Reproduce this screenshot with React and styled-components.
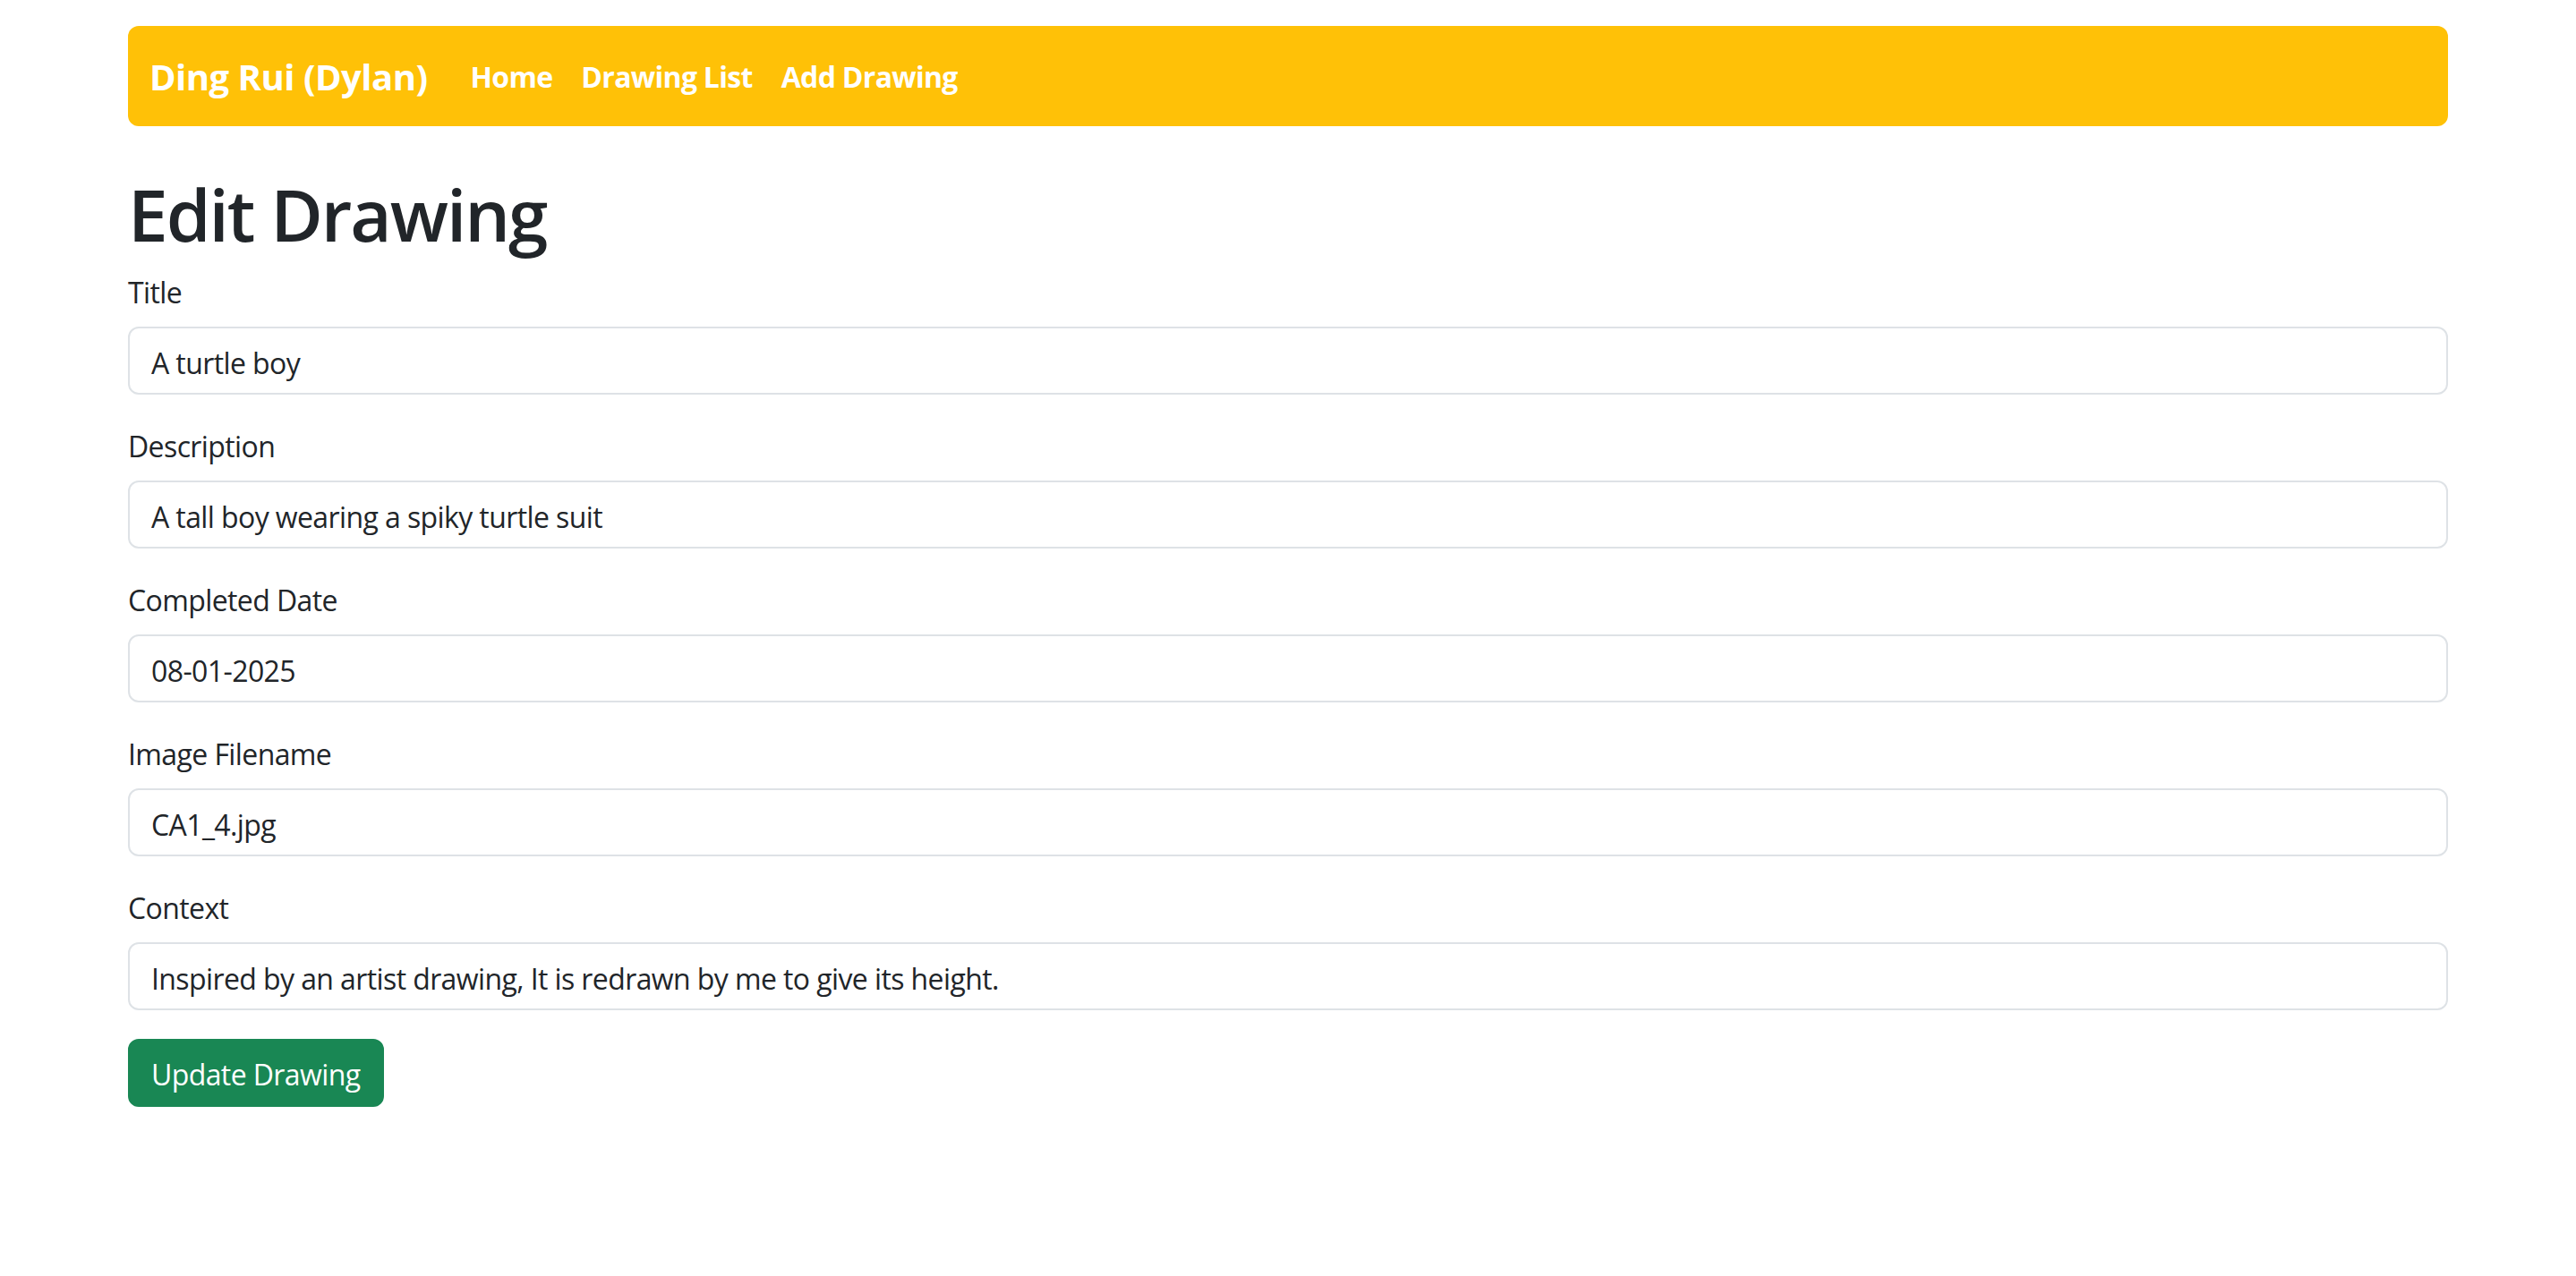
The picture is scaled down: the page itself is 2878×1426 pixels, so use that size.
import styled, { createGlobalStyle } from "styled-components";

const GlobalStyle = createGlobalStyle`
  body {
    margin: 0;
    background: #fff;
    color: #212529;
    font-family: "Open Sans", "Noto Sans", sans-serif;
  }
  * {
    box-sizing: border-box;
  }
`;

const Container = styled.div`
  width: 2592px;
  margin: 0 auto;
  padding-top: 29px;
`;

const Navbar = styled.nav`
  display: flex;
  align-items: center;
  background-color: #ffc107;
  border-radius: 12px;
  padding: 16px 24px;
`;

const Brand = styled.a`
  color: #fff;
  font-size: 40px;
  font-weight: 700;
  line-height: 60px;
  letter-spacing: -0.5px;
  padding: 11px 0 9px;
  margin-right: 32px;
  text-decoration: none;
`;

const NavLinks = styled.div`
  display: flex;
  align-items: center;
`;

const NavLink = styled.a`
  color: #fff;
  font-size: 32px;
  font-weight: 700;
  line-height: 48px;
  letter-spacing: -0.7px;
  padding: 17px 16px 15px;
  text-decoration: none;
`;

const Heading = styled.h1`
  font-size: 80px;
  font-weight: 600;
  line-height: 1.2;
  letter-spacing: -2px;
  margin: 48px 0 16px;
  padding-top: 2px;
  height: 96px;
`;

const FormGroup = styled.div`
  margin-bottom: 32px;
`;

const Label = styled.label`
  display: block;
  font-size: 32px;
  line-height: 48px;
  letter-spacing: -0.6px;
  margin-bottom: 16px;
  padding-top: 2px;
  height: 48px;
`;

const Input = styled.input`
  display: block;
  width: 100%;
  height: 76px;
  padding: 14px 24px 10px;
  font-family: inherit;
  font-size: 32px;
  line-height: 48px;
  letter-spacing: -0.6px;
  color: #212529;
  background: #fff;
  border: 2px solid #dee2e6;
  border-radius: 12px;
  outline: none;
`;

const SubmitButton = styled.button`
  height: 76px;
  padding: 14px 24px 10px;
  font-family: inherit;
  font-size: 32px;
  line-height: 48px;
  letter-spacing: -0.6px;
  color: #fff;
  background-color: #198754;
  border: 2px solid #198754;
  border-radius: 12px;
  cursor: pointer;
`;

const fields = [
  { id: "title", label: "Title", value: "A turtle boy" },
  { id: "description", label: "Description", value: "A tall boy wearing a spiky turtle suit" },
  { id: "completed", label: "Completed Date", value: "08-01-2025" },
  { id: "image", label: "Image Filename", value: "CA1_4.jpg" },
  {
    id: "context",
    label: "Context",
    value: "Inspired by an artist drawing, It is redrawn by me to give its height.",
  },
];

export default function App() {
  return (
    <>
      <GlobalStyle />
      <Container>
        <Navbar>
          <Brand href="#">Ding Rui (Dylan)</Brand>
          <NavLinks>
            <NavLink href="#">Home</NavLink>
            <NavLink href="#">Drawing List</NavLink>
            <NavLink href="#">Add Drawing</NavLink>
          </NavLinks>
        </Navbar>

        <Heading>Edit Drawing</Heading>
        <form onSubmit={(e) => e.preventDefault()}>
          {fields.map((f) => (
            <FormGroup key={f.id}>
              <Label htmlFor={f.id}>{f.label}</Label>
              <Input id={f.id} type="text" defaultValue={f.value} />
            </FormGroup>
          ))}
          <SubmitButton type="submit">Update Drawing</SubmitButton>
        </form>
      </Container>
    </>
  );
}
